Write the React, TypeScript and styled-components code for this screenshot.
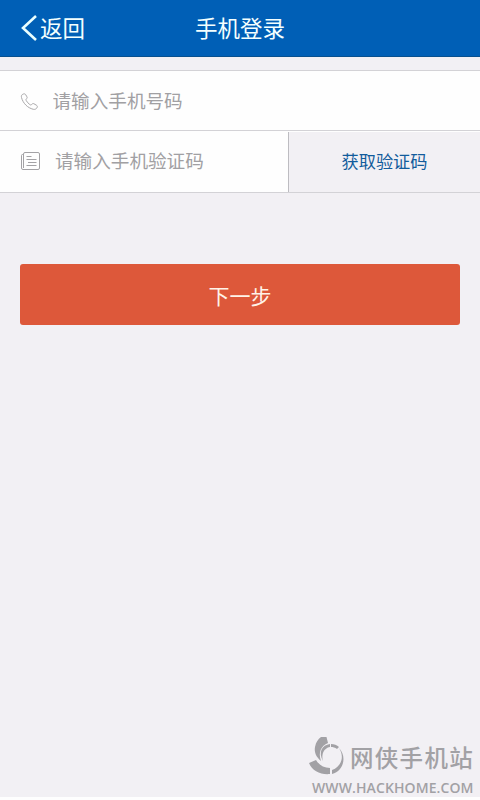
import React from 'react';
import styled, { createGlobalStyle } from 'styled-components';

const GlobalStyle = createGlobalStyle`
  * { box-sizing: border-box; }
  body { margin: 0; background: #fefefe; font-family: 'Noto Sans CJK SC', sans-serif; }
  button { font-family: inherit; border: 0; padding: 0; margin: 0; }
`;

const Screen = styled.main`
  display: flex;
  flex-direction: column;
  width: 480px;
  height: 797px;
  background: #f2f0f4;
`;

const Header = styled.header`
  display: grid;
  grid-template-columns: 120px 1fr 120px;
  align-items: center;
  height: 57px;
  padding-bottom: 2px;
  background: #005fb6;
  border-bottom: 1px solid #07508f;
`;

const BackButton = styled.button`
  display: flex;
  align-items: center;
  gap: 2px;
  padding-left: 20px;
  background: none;
  color: #f4ffff;
  font-size: 22.5px;
  line-height: 32px;
`;

const Title = styled.h1`
  margin: 0;
  color: #f4ffff;
  font-size: 22.5px;
  font-weight: 400;
  line-height: 32px;
  text-align: center;
`;

const Form = styled.form`
  display: flex;
  flex-direction: column;
  margin-top: 13px;
  border-top: 1px solid #d3d2d6;
`;

const Row = styled.div<{ $height: number }>`
  display: flex;
  align-items: center;
  height: ${(p) => p.$height}px;
  background: #fefefe;
  border-bottom: 1px solid #d3d2d6;
`;

const Field = styled.label<{ $gap: number; $lift: number }>`
  display: flex;
  flex: 1;
  align-items: center;
  gap: ${(p) => p.$gap}px;
  padding: 0 0 ${(p) => p.$lift}px 20px;
`;

const Input = styled.input`
  flex: 1;
  min-width: 0;
  height: 30px;
  margin-bottom: 2px;
  padding: 0;
  border: 0;
  outline: 0;
  background: transparent;
  font: 400 18.6px/30px 'Noto Sans CJK SC', sans-serif;
  color: #444;
  &::placeholder { color: #a1a0a3; opacity: 1; }
`;

const CodeButton = styled.button`
  align-self: stretch;
  width: 192px;
  background: #f2f0f4;
  border-left: 1px solid #bdbcc1;
  margin: 1px 0 0;
  padding-bottom: 4px;
  color: #125c9c;
  font-size: 17.2px;
`;

const NextButton = styled.button`
  height: 61px;
  margin: 71px 20px 0;
  border-radius: 3px;
  background: #dd583a;
  color: #fff3e8;
  font-size: 21px;
`;

const Watermark = styled.footer`
  display: flex;
  flex-direction: column;
  width: 171px;
  margin: auto 0 0 auto;
  color: #a2a1a5;
`;

const Brand = styled.div`
  display: flex;
  align-items: center;
  gap: 5px;
  height: 40px;
`;

const BrandName = styled.span`
  font-size: 23.5px;
  font-weight: 500;
  line-height: 40px;
  letter-spacing: 1.3px;
  white-space: nowrap;
`;

const BrandUrl = styled.span`
  padding: 1px 0 0 3px;
  height: 20px;
  font: 600 14px/20px 'Open Sans', sans-serif;
  letter-spacing: 0.1px;
  white-space: nowrap;
`;

const BackIcon = () => (
  <svg width="18" height="30" viewBox="0 -2 18 30" fill="none" stroke="#eaffff" strokeWidth="2.6">
    <path d="M16 2 3 14 16 26" />
  </svg>
);

const PhoneIcon = () => (
  <svg width="20" height="20" viewBox="0 -1 20 20" fill="none" stroke="#a9a8aa" strokeWidth="1">
    <path d="M3.4 2C1.7 2.5 1.1 3.8 1.5 5.5C3 11.2 7.5 15.9 13.3 17.3C15.2 17.7 16.6 16.8 17.2 15.3C17.6 14.3 17.2 13.7 16.4 13.2L14 11.8C13.1 11.3 12.4 11.5 11.8 12.3C11.2 13.2 10.6 13.1 9.8 12.5C8.3 11.5 7.1 10.1 6.2 8.5C5.7 7.7 5.9 7.2 6.6 6.7C7.3 6.1 7.3 5.6 6.9 4.8L5.7 2.7C5.1 1.8 4.4 1.7 3.4 2Z" />
  </svg>
);

const NoteIcon = () => (
  <svg width="20" height="20" viewBox="0 0 20 20" fill="none" stroke="#a3a2a5" strokeWidth="1">
    <path d="M3.5 17V3q0-1.5 1.5-1.5h13q1.5 0 1.5 1.5v14q0 1.5-1.5 1.5H3q-1.5 0-1.5-1.5V4.5q0-1 1-1h1M6.5 5.5h5M6.5 8.5h10M8 11.5h8.5M6.5 14.5h10" />
  </svg>
);

const BrandIcon = () => (
  <svg width="36" height="40" viewBox="0 0 36 40" fill="#a2a1a5">
    <path d="M12 0H17.5L19 6C12 9 9 15 12 24C7 20 5 15 6 10C7 5 9 2 12 0Z" />
    <path d="M0 26L7 23C10 28 15 31 21 31V37C12 38 3 34 0 26Z" />
    <path d="M14 24C9 15 13 8 21 7V10C15 11 12 17 14 24Z" />
    <path d="M22 7C25 7 28 8 30 10L28 12C26 10.5 24 10 22 10Z" />
    <path d="M30 11C38 19 35 34 23 37V33C32 30 36 20 30 11Z" />
  </svg>
);

export default function App() {
  return (
    <>
      <GlobalStyle />
      <Screen>
        <Header>
          <BackButton type="button"><BackIcon />返回</BackButton>
          <Title>手机登录</Title>
        </Header>
        <Form>
          <Row $height={60}>
            <Field $gap={12.5} $lift={0}><PhoneIcon /><Input type="tel" placeholder="请输入手机号码" /></Field>
          </Row>
          <Row $height={62}>
            <Field $gap={15} $lift={2}><NoteIcon /><Input placeholder="请输入手机验证码" /></Field>
            <CodeButton type="button">获取验证码</CodeButton>
          </Row>
          <NextButton type="button">下一步</NextButton>
        </Form>
        <Watermark>
          <Brand><BrandIcon /><BrandName>网侠手机站</BrandName></Brand>
          <BrandUrl>WWW.HACKHOME.COM</BrandUrl>
        </Watermark>
      </Screen>
    </>
  );
}
